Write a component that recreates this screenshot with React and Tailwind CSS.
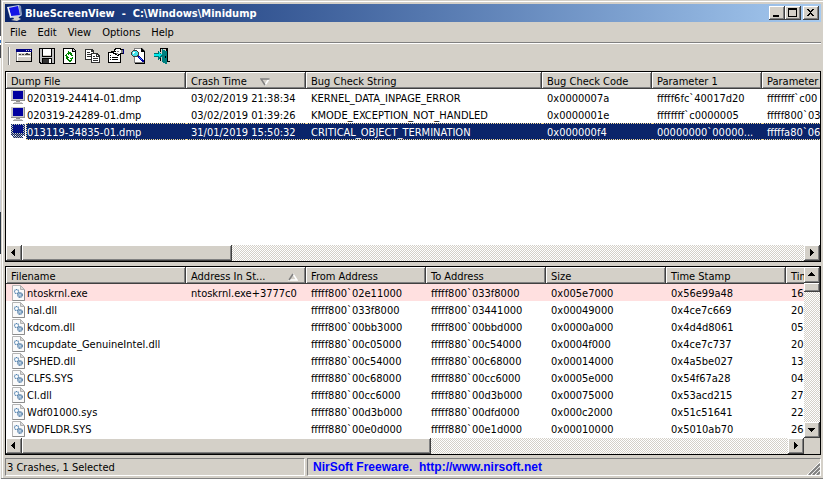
import { useState } from "react";
import clsx from "clsx";

const crashColumns = [
  { label: "Dump File", width: "w-[180px]" },
  { label: "Crash Time", width: "w-[120px]", sort: "desc" },
  { label: "Bug Check String", width: "w-[236px]" },
  { label: "Bug Check Code", width: "w-[110px]" },
  { label: "Parameter 1", width: "w-[110px]" },
  { label: "Parameter", width: "w-[110px]" },
];

const crashes = [
  ["020319-24414-01.dmp", "03/02/2019 21:38:34", "KERNEL_DATA_INPAGE_ERROR", "0x0000007a", "fffff6fc`40017d20", "ffffffff`c00"],
  ["020319-24289-01.dmp", "03/02/2019 01:39:26", "KMODE_EXCEPTION_NOT_HANDLED", "0x0000001e", "ffffffff`c0000005", "fffff800`03"],
  ["013119-34835-01.dmp", "31/01/2019 15:50:32", "CRITICAL_OBJECT_TERMINATION", "0x000000f4", "00000000`00000...", "fffffa80`06"],
];

const driverColumns = [
  { label: "Filename", width: "w-[180px]" },
  { label: "Address In St...", width: "w-[120px]", sort: "asc" },
  { label: "From Address", width: "w-[120px]" },
  { label: "To Address", width: "w-[120px]" },
  { label: "Size", width: "w-[120px]" },
  { label: "Time Stamp", width: "w-[120px]" },
  { label: "Tim", width: "w-[120px]" },
];

const drivers = [
  ["ntoskrnl.exe", "ntoskrnl.exe+3777c0", "fffff800`02e11000", "fffff800`033f8000", "0x005e7000", "0x56e99a48", "16"],
  ["hal.dll", "", "fffff800`033f8000", "fffff800`03441000", "0x00049000", "0x4ce7c669", "20"],
  ["kdcom.dll", "", "fffff800`00bb3000", "fffff800`00bbd000", "0x0000a000", "0x4d4d8061", "05"],
  ["mcupdate_GenuineIntel.dll", "", "fffff880`00c05000", "fffff880`00c54000", "0x0004f000", "0x4ce7c737", "20"],
  ["PSHED.dll", "", "fffff880`00c54000", "fffff880`00c68000", "0x00014000", "0x4a5be027", "13"],
  ["CLFS.SYS", "", "fffff880`00c68000", "fffff880`00cc6000", "0x0005e000", "0x54f67a28", "04"],
  ["CI.dll", "", "fffff880`00cc6000", "fffff880`00d3b000", "0x00075000", "0x53acd215", "27"],
  ["Wdf01000.sys", "", "fffff880`00d3b000", "fffff880`00dfd000", "0x000c2000", "0x51c51641", "22"],
  ["WDFLDR.SYS", "", "fffff880`00e0d000", "fffff880`00e1d000", "0x00010000", "0x5010ab70", "26"],
];

const raised = "bg-[#d4d0c8] shadow-[inset_-1px_-1px_#404040,inset_1px_1px_#fff,inset_-2px_-2px_#808080]";
const track = "bg-[repeating-conic-gradient(#fff_0_25%,#d4d0c8_0_50%)] bg-[length:2px_2px]";

function Icon({ children, w = 16, h = 16 }) {
  return (
    <svg width={w} height={h} viewBox={`0 0 ${w} ${h}`} shapeRendering="crispEdges" className="block shrink-0" aria-hidden="true">
      {children}
    </svg>
  );
}

function AppIcon() {
  return (
    <svg width="16" height="16" viewBox="0 0 16 16" className="block shrink-0" aria-hidden="true">
      <path d="M0 2 12 0l3 10-3 2-9 1z" fill="#c9d3e8" />
      <path d="M2 3 11 1l2 9-9 1z" fill="#1414e6" />
      <path d="m12 0 2 1 1 9-2 0z" fill="#8494b8" />
      <path d="m6 12 5-1 1 2 2 1-4 2-6-1 3-1z" fill="#d4d0c8" />
      <path d="m1 2 3 10" stroke="#fff" />
    </svg>
  );
}

function PropertiesWindowIcon() {
  return (
    <Icon>
      <path d="M0 1h16v13H0z" fill="#808080" />
      <path d="M15 1h1v13H0v-1h15z" fill="#000" />
      <path d="M1 2h14v11H1z" fill="#d4d0c8" />
      <path d="M0 1h16v3H0z" fill="#000080" />
      <path d="M10 2h1v1h-1zM12 2h1v1h-1zM14 2h1v1h-1z" fill="#d4d0c8" />
      <path d="M1 4h14v1H1zM1 8h14v1H1zM1 5h1v8H1z" fill="#fff" />
      <path d="M3 6h2v1H3zM6 6h2v1H6zM9 6h5v1H9zM10 5h2v1h-2z" fill="#404040" />
    </Icon>
  );
}

function SaveIcon() {
  return (
    <Icon>
      <path d="M0 0h16v16H1v-1H0z" fill="#000" />
      <path d="M1 1h2v8h10V1h2v14h-2v-5H3v5H2v-1H1z" fill="#c0c0c0" />
      <path d="M4 0h8v8H4z" fill="#fff" />
      <path d="M4 0h8v1H4z" fill="#000" />
      <path d="M4 7h8v1H4zM14 1h1v1h-1z" fill="#d4d0c8" />
      <path d="M10 11h2v4h-2z" fill="#fff" />
      <path d="M4 11h6v4H4z" fill="#303030" />
    </Icon>
  );
}

function RefreshIcon() {
  return (
    <Icon>
      <path d="M1 0h10l3 3v13H1z" fill="#000" />
      <path d="M2 1h8v3h3v11H2z" fill="#fff" />
      <path d="M11 1v2h2z" fill="#c0c0c0" />
      <path d="M6 3h1v1h2v1h1v2h1v1H9V7H8V6H7v1H6V6H5V5h1zM4 6h1v3H4zM3 7h1v1H3zM5 5h1v1H5z" fill="#008000" />
      <path d="M4 9h3v1H6v1h1v1h2v-1h1V9h1v2h-1v2H9v1H7v-1H6v-1H5v-1H4z" fill="#008000" />
      <path d="M8 10h3v1H8zM7 4h1v1H7zM5 8h1v1H5z" fill="#00a000" />
    </Icon>
  );
}

function CopyIcon() {
  return (
    <Icon>
      <path d="M0 1h7l2 2v9H0z" fill="#303030" />
      <path d="M1 2h5v2h2v7H1z" fill="#fff" />
      <path d="M2 4h3v1H2zM2 6h5v1H2zM2 8h5v1H2z" fill="#303030" />
      <path d="M6 5h6l3 3v7H6z" fill="#303030" />
      <path d="M7 6h4v3h3v5H7z" fill="#fff" />
      <path d="M12 7h1v1h-1z" fill="#fff" />
      <path d="M8 8h2v1H8zM8 10h5v1H8zM8 12h5v1H8z" fill="#303030" />
    </Icon>
  );
}

function PropertiesIcon() {
  return (
    <Icon>
      <path d="M0 4h13v11H0z" fill="#000" />
      <path d="M1 5h11v9H1z" fill="#fff" />
      <path d="M2 9h1v1H2zM4 9h6v1H4zM2 11h1v1H2zM4 11h6v1H4zM2 7h1v1H2z" fill="#000" />
      <path d="M7 0h6v1h3v5h-3v1h-2v1H9V7H7V6H5V5H4V4H3V3h3V1h1z" fill="#000" />
      <path d="M8 1h4v1h2v3h-2v1h-2v1H9V5H6V4h2V3H7V2h1z" fill="#fff" />
      <path d="M9 3h2v1H9zM8 5h2v1H8zM13 2h2v3h-2z" fill="#808080" />
      <path d="M15 1h1v5h-1z" fill="#000080" />
    </Icon>
  );
}

function FindIcon() {
  return (
    <Icon>
      <path d="M3 0h8l3 3v12H3z" fill="#808080" />
      <path d="M4 1h6v3h3v10H4z" fill="#fff" />
      <path d="M10 0h1v1h1v1h1v1h1v13H4v-1h9V4h-3z" fill="#000" />
      <path d="M1 3h1V2h4v1h1v1h1v4H7v1H2V8H1V7H0V4h1z" fill="#404040" />
      <path d="M2 3h4v1h1v3H6v1H2V7H1V4h1z" fill="#40e0e8" />
      <path d="M2 4h2v1H3v1H2z" fill="#fff" />
      <path d="M7 8h2v1h1v1h1v1h1v1h1v2h-2v-1h-1v-1H9v-1H8v-1H7z" fill="#0000a0" />
      <path d="M8 9h1v1h1v1h1v1h-1v-1H9v-1H8z" fill="#4080ff" />
    </Icon>
  );
}

function ExitIcon() {
  return (
    <Icon>
      <path d="M6 0h8v13h2v1h-3v-1H6v-3h1V4H6z" fill="#000" />
      <path d="M7 1h5v12H7z" fill="#d4d0c8" />
      <path d="M8 1h1v1h2v1h2v13h-2v-1H9v-1H8z" fill="#008080" />
      <path d="M11 8h1v2h-1z" fill="#000" />
      <path d="M0 5h4V3h1v1h1v1h1v1h1v1h1v1H8v1H7v1H6v1H5v1H4V9H0z" fill="#007070" />
      <path d="M0 6h5V4h1v2h2v1H7v1H6v1H5V8H0z" fill="#00e8e8" />
    </Icon>
  );
}

function MonitorIcon({ selected }) {
  return (
    <Icon w={14} h={15}>
      <path d="M0 0h14v11H0z" fill="#c8c8c8" />
      <path d="M13 0h1v11H0v-1h13z" fill="#909090" />
      <path d="M2 1h10v8H2z" fill="#0000a0" />
      <path d="M5 11h4v1H5z" fill="#909090" />
      <path d="M3 12h8v1H3z" fill="#c8c8c8" />
      <path d="M2 13h10v1H2z" fill="#a0a0a0" />
      {selected && (
        <>
          <defs>
            <pattern id="dither" width="2" height="2" patternUnits="userSpaceOnUse">
              <path d="M0 0h1v1H0zM1 1h1v1H1z" fill="#0a246a" />
            </pattern>
          </defs>
          <path d="M0 0h14v12h-2v2H2v-2H0z" fill="url(#dither)" />
        </>
      )}
    </Icon>
  );
}

function DriverIcon() {
  return (
    <svg width="14" height="16" viewBox="0 0 14 16" className="block shrink-0" aria-hidden="true">
      <path d="M1.5.5h8l4 4v11h-12z" fill="#fafafa" stroke="#b4b4b4" />
      <path d="M9.5.5v4h4z" fill="#d8d8d8" stroke="#b0b0b0" />
      <path d="M13.5 5v10.5h-12" fill="none" stroke="#8c8c8c" />
      <circle cx="5.5" cy="6.5" r="2" fill="#fff" stroke="#4f80ae" strokeWidth="1.2" strokeDasharray="1.1 .5" />
      <circle cx="9" cy="10" r="2.200" fill="#d8e8f5" stroke="#2d5f90" strokeWidth="1.2" strokeDasharray="1.2 .4" />
      <circle cx="9" cy="10" r=".6" fill="#2d5f90" />
    </svg>
  );
}

function SortArrow({ direction }) {
  return (
    <svg width="10" height="8" viewBox="0 0 10 8" className="block shrink-0" aria-hidden="true">
      {direction === "desc" ? (
        <>
          <path d="M9 1 5 7" fill="none" stroke="#fff" strokeWidth="1.5" />
          <path d="M9.5 1H1l4 6" fill="none" stroke="#808080" strokeWidth="1.5" />
        </>
      ) : (
        <>
          <path d="M5 1 9 7H.5" fill="none" stroke="#fff" strokeWidth="1.5" />
          <path d="M1 7 5 1" fill="none" stroke="#808080" strokeWidth="1.5" />
        </>
      )}
    </svg>
  );
}

const arrows = {
  left: "M9 4v7h-1v-1H7V9H6V8H5V7h1V6h1V5h1V4z",
  right: "M6 4v7h1v-1h1V9h1V8h1V7H9V6H8V5H7V4z",
  up: "M4 9h7V8h-1V7H9V6H8V5H7v1H6v1H5v1H4z",
  down: "M4 6h7v1h-1v1H9v1H8v1H7V9H6V8H5V7H4z",
};

function ScrollButton({ direction }) {
  return (
    <button type="button" aria-label={`Scroll ${direction}`} className={clsx("size-4 shrink-0", raised)}>
      <Icon>
        <path d={arrows[direction]} fill="#000" />
      </Icon>
    </button>
  );
}

function HorizontalScroll({ thumb }) {
  return (
    <div className="flex h-4 shrink-0">
      <ScrollButton direction="left" />
      <div className={clsx("min-w-0 flex-1", track)}>
        <div className={clsx("h-4", thumb, raised)} />
      </div>
      <ScrollButton direction="right" />
    </div>
  );
}

function ListTable({ label, columns, rows, renderIcon, selected, marked, onSelect }) {
  return (
    <table aria-label={label} className="w-max table-fixed border-collapse">
      <thead>
        <tr>
          {columns.map((column) => (
            <th key={column.label} scope="col" className={clsx("p-0 text-left font-normal", column.width)}>
              <div className={clsx("flex h-[17px] items-center justify-between pt-[2px] pl-[5px] whitespace-nowrap", column.width, raised)}>
                {column.label}
                {column.sort && (
                  <span className={column.sort === "desc" ? "pr-9" : "pr-2"}>
                    <SortArrow direction={column.sort} />
                  </span>
                )}
              </div>
            </th>
          ))}
        </tr>
      </thead>
      <tbody>
        {rows.map((row, r) => {
          const active = r === selected;
          const fill = active
            ? "border-y border-dotted border-[#f5db95] bg-[#0a246a] text-white"
            : "border-y border-transparent";
          return (
            <tr key={row[0]} onClick={() => onSelect?.(r)} className={clsx(r === marked && "bg-[#ffe0e0]")}>
              {row.map((cell, c) => (
                <td key={c} className="p-0">
                  {c === 0 ? (
                    <div className="flex h-[17px] items-center pl-[5px]">
                      {renderIcon(active)}
                      <span className={clsx("ml-px flex h-[17px] min-w-0 flex-1 items-center border-l pt-[2px] whitespace-nowrap", fill)}>{cell}</span>
                    </div>
                  ) : (
                    <div className={clsx("flex h-[17px] items-center pt-[2px] pl-[5px] whitespace-nowrap", fill)}>{cell}</div>
                  )}
                </td>
              ))}
            </tr>
          );
        })}
      </tbody>
    </table>
  );
}

const toolbar = [
  ["Advanced Options", PropertiesWindowIcon],
  ["Save Selected Items", SaveIcon],
  ["Refresh", RefreshIcon],
  ["Copy Selected Items", CopyIcon],
  ["Properties", PropertiesIcon],
  ["Find", FindIcon],
  ["Exit", ExitIcon],
];

function TitleBar() {
  return (
    <header className="flex h-[18px] shrink-0 items-center bg-linear-to-r from-[#0a246a] to-[#a6caf0] px-[2px] text-white">
      <AppIcon />
      <h1 className="ml-[2px] flex-1 text-[11px] font-bold whitespace-pre">BlueScreenView  -  C:\Windows\Minidump</h1>
      <button type="button" aria-label="Minimize" className={clsx("h-[14px] w-4", raised)}>
        <Icon h={14}><path d="M4 9h6v2H4z" /></Icon>
      </button>
      <button type="button" aria-label="Maximize" className={clsx("h-[14px] w-4", raised)}>
        <Icon h={14}><path d="M3 2h9v9H3zM4 4v6h7V4z" fillRule="evenodd" /></Icon>
      </button>
      <button type="button" aria-label="Close" className={clsx("ml-[2px] h-[14px] w-4", raised)}>
        <Icon h={14}><path d="M4 3h2v1h1v1h1V4h1V3h2v1h-1v1H9v1H8v1h1v1h1v1h1v1H9V9H8V8H7v1H6v1H4V9h1V8h1V7h1V6H6V5H5V4H4z" /></Icon>
      </button>
    </header>
  );
}

export default function App() {
  const [selected, setSelected] = useState(2);

  return (
    <div className="flex min-h-screen bg-[#d4d0c8] font-['DejaVu_Sans_Condensed','DejaVu_Sans',sans-serif] text-[11px] leading-[13px] text-black">
      <div className="w-px shrink-0 bg-[linear-gradient(#50545c_0_36px,#fff_36px_40px,#3070c0_40px_43px,#fff_43px_45px,#44464c_45px_58px,#f4f4f4_58px_190px,#c8ccd4_190px_212px,#283440_212px_254px,#f0f0f0_254px)]" />
      <div className="flex min-w-0 flex-1 flex-col border-b border-[#808080] pt-[4px] pr-[2px] pb-[2px] pl-[4px] shadow-[inset_1px_1px_#d4d0c8,inset_2px_2px_#fff]">
        <TitleBar />

        <nav className="flex h-5 shrink-0 items-center gap-[11px] pl-[5px]">
          {["File", "Edit", "View", "Options", "Help"].map((item) => (
            <button key={item} type="button">{item}</button>
          ))}
        </nav>

        <div className="flex h-[29px] shrink-0 items-center border-t border-[#808080] pb-[3px] pl-[3px] shadow-[inset_0_1px_#fff]">
          <div className="mr-[2px] h-[18px] w-[2px] border-r border-white bg-[#808080]" />
          {toolbar.map(([name, Glyph]) => (
            <button key={name} type="button" aria-label={name} className="flex h-[22px] w-[23px] items-center pl-[4px]">
              <Glyph />
            </button>
          ))}
        </div>

        <section className="flex min-h-[120px] flex-1 flex-col border border-black bg-white">
          <div className="min-h-0 flex-1 overflow-hidden">
            <ListTable
              label="Crashes"
              columns={crashColumns}
              rows={crashes}
              selected={selected}
              onSelect={setSelected}
              renderIcon={(active) => <MonitorIcon selected={active} />}
            />
          </div>
          <HorizontalScroll thumb="w-[210px]" />
        </section>

        <section className="mt-1 flex shrink-0 border border-black bg-white">
          <div className="flex min-w-0 flex-1 flex-col">
            <div className="overflow-hidden">
              <ListTable label="Drivers" columns={driverColumns} rows={drivers} marked={0} renderIcon={() => <DriverIcon />} />
            </div>
            <div className="h-px" />
            <HorizontalScroll thumb="w-[409px]" />
          </div>
          <div className="flex w-4 shrink-0 flex-col bg-[#d4d0c8]">
            <ScrollButton direction="up" />
            <div className={clsx("flex-1", track)}>
              <div className={clsx("h-[9px]", raised)} />
            </div>
            <ScrollButton direction="down" />
            <div className="size-4" />
          </div>
        </section>

        <footer className="mt-[3px] flex h-[18px] shrink-0 gap-[2px]">
          <div className="flex w-[300px] items-center border border-t-[#808080] border-r-white border-b-white border-l-[#808080] pl-px">
            3 Crashes, 1 Selected
          </div>
          <div className="flex min-w-0 flex-1 items-end justify-between border border-t-[#808080] border-r-white border-b-white border-l-[#808080] pl-[5px]">
            <a href="http://www.nirsoft.net" className="self-center font-['Liberation_Sans',Arial,sans-serif] text-xs leading-[13px] font-bold whitespace-pre text-[#0000ff]">
              NirSoft Freeware.  http://www.nirsoft.net
            </a>
            <svg width="13" height="13" viewBox="0 0 13 13" className="block shrink-0" aria-hidden="true">
              <path d="M0 13 13 0M4 13l9-9M8 13l5-5" stroke="#fff" />
              <path d="M2 13 13 2M6 13l7-7M10 13l3-3" stroke="#808080" strokeWidth="2" />
            </svg>
          </div>
        </footer>
      </div>
    </div>
  );
}
